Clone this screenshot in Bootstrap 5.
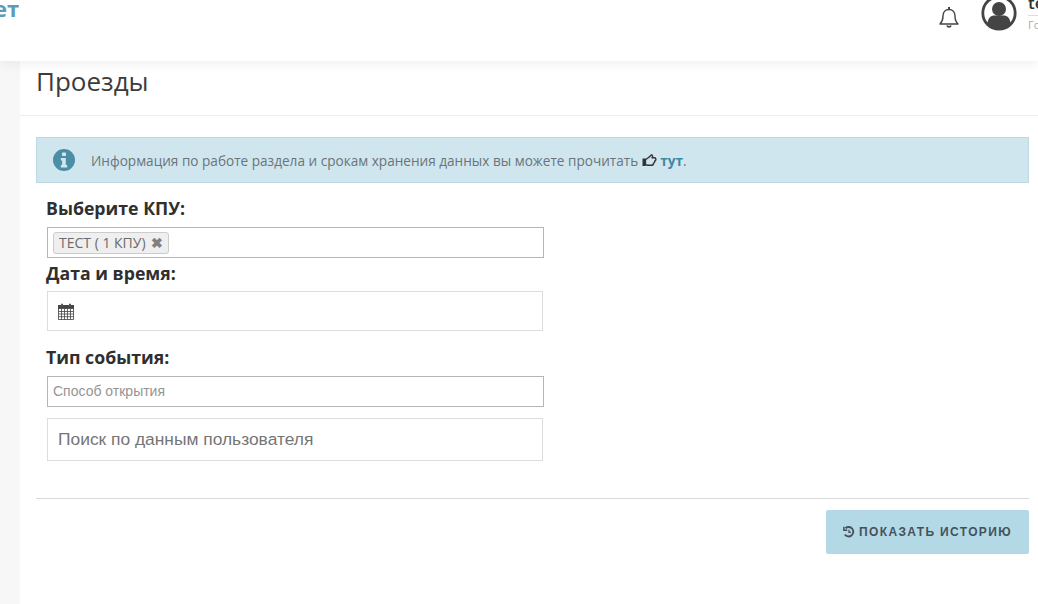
<!DOCTYPE html>
<html lang="ru">
<head>
  <meta charset="UTF-8">
  <meta name="viewport" content="width=device-width, initial-scale=1.0">
  <title>Проезды</title>
  <link href="https://cdn.jsdelivr.net/npm/bootstrap@5.3.0/dist/css/bootstrap.min.css" rel="stylesheet">
  <style>
    html, body { height: 100%; overflow: hidden; }
    body { background: #f7f7f7; font-family: "Open Sans", sans-serif; color: #333; }
    .top-bar { height: 61px; background: #fff; box-shadow: 0 2px 12px rgba(0,0,0,.07); position: relative; z-index: 2; overflow: hidden; }
    .brand-tail { font-size: 22px; font-weight: 700; color: #5d9cb5; line-height: 22px; margin: -3px 0 0 -6px; }
    .bell-ico { margin-top: 3px; margin-right: 22px; }
    .user-ico { margin-top: -5px; margin-right: 11px; }
    .user-info { width: 10px; overflow: hidden; white-space: nowrap; margin-top: -7px; }
    .user-name { font-size: 17px; line-height: 20px; font-weight: 600; color: #333; border-bottom: 1px solid #ddd; width: 60px; padding-bottom: 2px; }
    .user-role { font-size: 11px; line-height: 18px; color: #aaa; }
    .page-body { margin-left: 20px; background: #fff; height: 543px; padding: 0 9px 0 16px; }
    .page-title { margin: 0 -9px 0 -16px; padding: 2px 16px 0; height: 55px; border-bottom: 1px solid #eee; font-size: 26px; line-height: 36px; font-weight: 400; color: #3c3c3c; }
    .info-box { margin: 21px 0 0; height: 46px; padding: 0 0 0 16px; background: #d0e6ee; border: 1px solid #bdd9e4; border-radius: 0; font-size: 13.6px; line-height: 20px; color: #6a7479; gap: 16px; }
    .info-text { padding-top: 1px; }
    .info-text svg { vertical-align: -1px; }
    .info-text b { color: #3d8aa3; }
    .form-part { padding-left: 10px; width: 518px; }
    .field-cap { font-size: 17.7px; font-weight: 700; line-height: 24px; color: #2f2f2f; margin: 0; }
    .cap-kpu { margin-top: 13px; }
    .cap-date { margin-top: 3px; }
    .cap-type { margin-top: 14px; }
    .box-field { width: 497px; background: #fff; }
    .kpu-box { margin: 7px 0 0 1px; height: 31px; border: 1px solid #b5b5b5; padding: 4px 5px; }
    .kpu-tag { height: 22px; border: 1px solid #ccc; background: #efefef; border-radius: 3px; padding: 0 5px; font-size: 14px; line-height: 20px; color: #6b6b6b; gap: 5px; }
    .kpu-tag span { font-weight: 700; color: #808080; font-size: 14px; }
    .date-box { margin: 6px 0 0 1px; height: 40px; border: 1px solid #ddd; padding-left: 10px; width: 496px; }
    .type-box { margin: 7px 0 0 1px; height: 31px; border: 1px solid #b5b5b5; padding-left: 5px; font-family: "Liberation Sans", sans-serif; font-size: 14px; color: #959595; }
    .search-box { margin: 11px 0 0 1px; height: 43px; width: 496px; border: 1px solid #ddd; padding-left: 10px; font-family: "Liberation Sans", sans-serif; font-size: 17.4px; color: #757575; }
    .sep-line { margin: 37px 0 0; border: 0; border-top: 1px solid #d9d9d9; opacity: 1; }
    .history-btn { margin-top: 11px; width: 203px; height: 44px; background: #b3d9e7; border: 0; border-radius: 2px; padding: 0; font-family: "Liberation Sans", sans-serif; font-size: 12px; font-weight: 700; letter-spacing: 1.35px; color: #45515a; gap: 4px; }
  </style>
</head>
<body>
  <!-- Top bar -->
  <header class="top-bar d-flex align-items-start">
    <div class="brand-tail">ет</div>
    <div class="ms-auto d-flex align-items-start flex-shrink-0">
      <svg class="bell-ico" width="20" height="26" viewBox="0 0 20 26" fill="none" stroke="#444" stroke-width="1.4" stroke-linejoin="round">
        <path d="M1 21c2-2 3-3.500 3-8 0-4 2.500-6.500 6-6.500s6 2.500 6 6.500c0 4.500 1 6 3 8z"/>
        <path d="M10 4v2.500" stroke-width="2"/>
        <path d="M8 22.500c.5 1.800 3.500 1.800 4 0" stroke-width="1.600"/>
      </svg>
      <svg class="user-ico" width="36" height="36" viewBox="0 0 36 36">
        <circle cx="18" cy="18" r="16.200" fill="#fff" stroke="#444" stroke-width="2.800"/>
        <circle cx="18" cy="14" r="7" fill="#444"/>
        <path d="M6.500 29c0-6 3.500-8.500 7-8.500h9c3.500 0 7 2.500 7 8.500-3 3-7 4.500-11.500 4.500S9.500 32 6.500 29z" fill="#444"/>
      </svg>
      <div class="user-info">
        <div class="user-name">test</div>
        <div class="user-role">Гость</div>
      </div>
    </div>
  </header>

  <main class="page-body">
    <h1 class="page-title">Проезды</h1>

    <!-- Info message -->
    <div class="alert info-box d-flex align-items-center" role="alert">
      <svg width="22" height="22" viewBox="0 0 22 22">
        <circle cx="11" cy="11" r="11" fill="#4c8ea6"/>
        <rect x="9" y="3.500" width="4" height="3.500" rx=".6" fill="#d0e6ee"/>
        <path d="M7.800 9h5v7h1.400v2.500H7.800V16h1.300v-4.500H7.800z" fill="#d0e6ee"/>
      </svg>
      <div class="info-text">Информация по работе раздела и срокам хранения данных вы можете прочитать
        <svg width="15" height="13" viewBox="0 0 15 13" fill="none" stroke="#333" stroke-width="1.400" stroke-linejoin="round">
          <rect x=".5" y="4.500" width="3" height="7.500" fill="#333" stroke="none"/>
          <path d="M3.500 5.500C5 5 6 4 6.800 3.300 8 2.300 8.500 1.500 9.200 1c1.300-.3 1.800 1.300.8 2.800h2.500c1.800 0 1.800 3 .2 3.200.2 1.200-.5 2-1.200 2.200 0 1.300-.8 2.100-2 2.100H6.500c-1 0-1.800-.4-3-.6z"/>
        </svg>
        <b>тут</b>.</div>
    </div>

    <!-- Filters -->
    <form class="form-part">
      <p class="field-cap cap-kpu">Выберите КПУ:</p>
      <div class="kpu-box box-field d-flex align-items-center">
        <div class="kpu-tag d-inline-flex align-items-center">ТЕСТ ( 1 КПУ) <span>✖</span></div>
      </div>
      <p class="field-cap cap-date">Дата и время:</p>
      <div class="date-box box-field d-flex align-items-center">
        <svg width="16" height="17" viewBox="0 0 16 17" fill="none" stroke="#444" stroke-width=".8">
          <rect x=".5" y="2.500" width="15" height="14" fill="#fff"/>
          <rect x=".5" y="2.500" width="15" height="3" fill="#444"/>
          <path d="M.5 8.500h15M.5 11h15M.5 13.700h15M3.500 6v10.500M6.500 6v10.500M9.500 6v10.500M12.500 6v10.500"/>
          <path d="M4 .8v3M12 .8v3" stroke-width="2" stroke="#555"/>
        </svg>
      </div>
      <p class="field-cap cap-type">Тип события:</p>
      <div class="type-box box-field d-flex align-items-center">Способ открытия</div>
      <div class="search-box box-field d-flex align-items-center">Поиск по данным пользователя</div>
    </form>

    <hr class="sep-line">
    <div class="d-flex justify-content-end">
      <button type="button" class="btn history-btn d-flex align-items-center justify-content-center">
        <svg width="12" height="12" viewBox="0 0 12 12" fill="none" stroke="#45515a" stroke-width="1.900">
          <path d="M2.500 2.200A4.700 4.700 0 1 1 1.800 8.500"/>
          <path d="M.9.800v3.400h3.400" stroke-width="1.500"/>
          <path d="M6 3.800v2.600h2" stroke-width="1.300"/>
        </svg>
        ПОКАЗАТЬ ИСТОРИЮ
      </button>
    </div>
  </main>

  <script src="https://cdn.jsdelivr.net/npm/bootstrap@5.3.0/dist/js/bootstrap.bundle.min.js"></script>
</body>
</html>
